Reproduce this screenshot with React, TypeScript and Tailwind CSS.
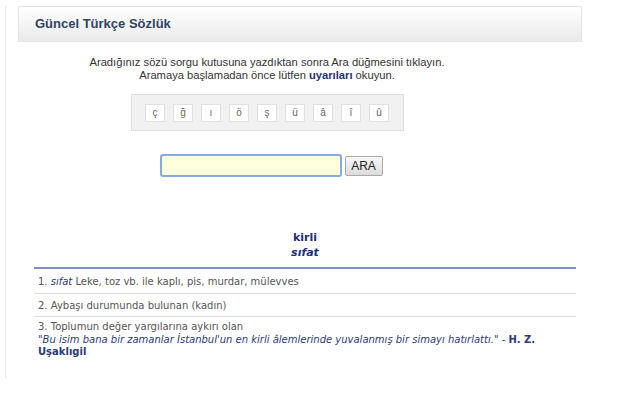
import React from "react";

const chars = ["ç", "ğ", "ı", "ö", "ş", "ü", "â", "î", "û"];

export default function App() {
  return (
    <div className="w-[626px] h-[394px] bg-white overflow-hidden" style={{ fontFamily: '"Liberation Sans", Arial, sans-serif' }}>
      <div className="ml-[5px] w-[600px] h-[372px] border-l border-[#e6e6e6]">
        {/* header */}
        <div className="mt-[6px] ml-[12px] w-[564px] h-[36px] border border-[#e4e4e4] bg-gradient-to-b from-white to-[#eaeaea] flex items-center pl-[16px]">
          <span className="text-[13px] font-bold text-[#2f4464]">Güncel Türkçe Sözlük</span>
        </div>

        {/* form */}
        <div className="w-[522px] flex flex-col items-center">
          <div className="mt-[14px] text-[11.2px] leading-[13px] text-[#333] text-center">
            <div>Aradığınız sözü sorgu kutusuna yazdıktan sonra Ara düğmesini tıklayın.</div>
            <div>
              Aramaya başlamadan önce lütfen <span className="text-[#1f3370] font-semibold">uyarıları</span> okuyun.
            </div>
          </div>
          <div className="mt-[12px] w-[273px] h-[37px] bg-[#f1f1f1] border border-[#dedede] flex items-center justify-center gap-[8px]">
            {chars.map((c) => (
              <div
                key={c}
                className="w-[20px] h-[18px] bg-white border border-[#e0e0e0] flex items-center justify-center text-[10px] text-[#666]"
              >
                {c}
              </div>
            ))}
          </div>
          <div className="mt-[23px] ml-[8px] flex items-center">
            <div className="w-[182px] h-[23px] bg-[#ffffdc] border-2 border-[#84ace0] rounded-[3px]" />
            <div className="ml-[3px] w-[38px] h-[20px] border border-[#a9a9a9] rounded-[2px] bg-gradient-to-b from-[#f8f8f8] to-[#dcdcdc] flex items-center justify-center text-[12px] text-[#222]">
              ARA
            </div>
          </div>
        </div>

        {/* definitions */}
        <div className="ml-[28px] w-[542px]" style={{ fontFamily: '"DejaVu Sans", Verdana, sans-serif' }}>
          <div className="mt-[53px] flex flex-col items-center text-[#1f2f7c] font-bold text-[11px] leading-[15px]">
            <div>kirli</div>
            <div className="italic">sıfat</div>
          </div>
          <div className="mt-[7px] h-[2px] bg-[#7f8fc2]" />
          <div className="h-[25px] border-b border-[#dcdcdc] flex items-center pl-[4px] text-[10px] text-[#555]">
            <span>1.&nbsp;</span>
            <span className="italic text-[#2b3a78]">sıfat</span>
            <span>&nbsp;Leke, toz vb. ile kaplı, pis, murdar, mülevves</span>
          </div>
          <div className="h-[23px] border-b border-[#dcdcdc] flex items-center pl-[4px] text-[10px] text-[#555]">
            2. Aybaşı durumunda bulunan (kadın)
          </div>
          <div className="pt-[4px] pl-[4px] text-[10px] leading-[12.5px] text-[#555]">
            <div>3. Toplumun değer yargılarına aykırı olan</div>
            <div className="text-[#2b3a78]">
              <span className="italic">"Bu isim bana bir zamanlar İstanbul'un en kirli âlemlerinde yuvalanmış bir simayı hatırlattı."</span>
              <span> - </span>
              <span className="font-bold">H. Z. Uşaklıgil</span>
            </div>
          </div>
        </div>
      </div>
      <div className="mt-[20px] ml-[274px] flex gap-[1px]">
        <div className="w-[15px] h-[2px] bg-[#b8c4c6]" />
        <div className="w-[15px] h-[2px] bg-[#c4c4c4]" />
      </div>
    </div>
  );
}
